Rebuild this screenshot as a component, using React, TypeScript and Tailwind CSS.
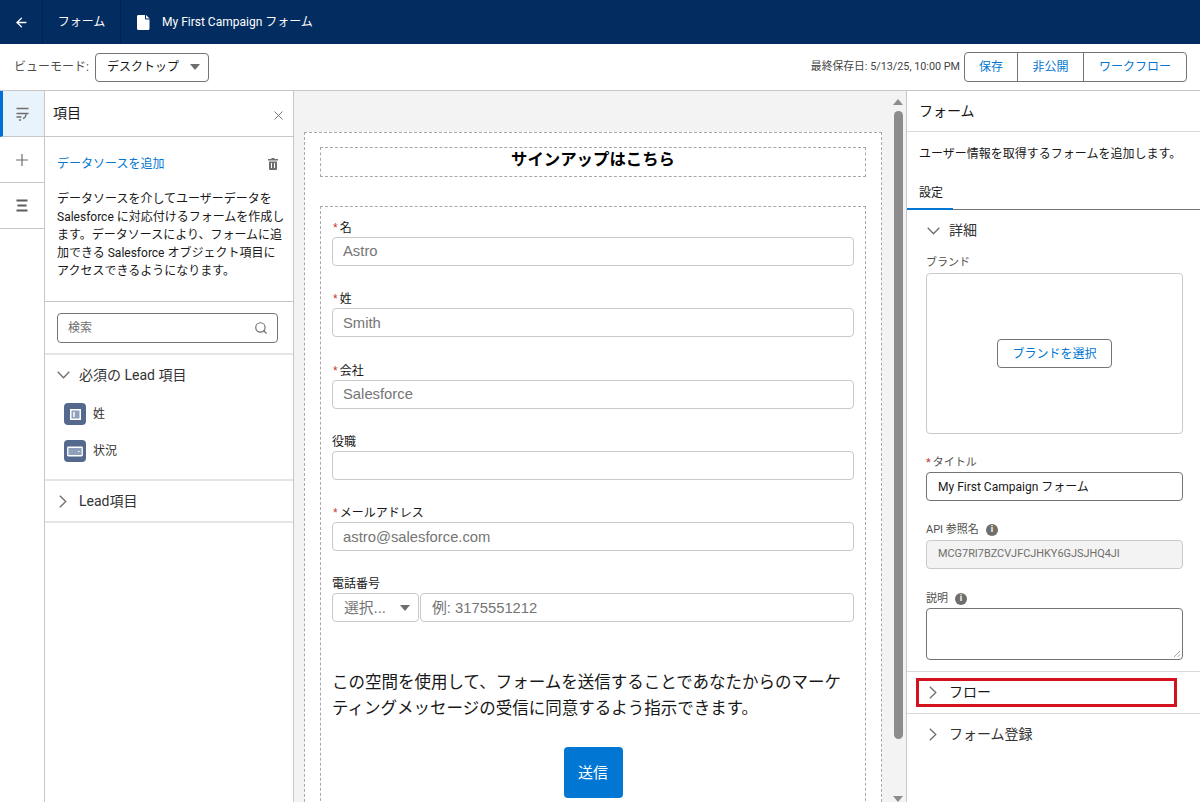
import React from "react";
import { ArrowLeft, Search, X } from "lucide-react";

const sans = "font-['Roboto','Noto_Sans_CJK_JP',sans-serif]";

const fields = [
  { label: "名", value: "Astro", required: true },
  { label: "姓", value: "Smith", required: true },
  { label: "会社", value: "Salesforce", required: true },
  { label: "役職", value: "", required: false },
  { label: "メールアドレス", value: "astro@salesforce.com", required: true },
];

const Caret = () => (
  <span className="w-0 h-0 border-x-[5px] border-x-transparent border-t-[6px] border-t-[#706e6b]" />
);

const ChevronDownIcon = () => (
  <svg width="13" height="8" viewBox="0 0 13 8" fill="none" stroke="#706e6b" strokeWidth="1.300">
    <path d="M0.700 0.800L6.500 6.800L12.300 0.800" />
  </svg>
);

const ChevronRightIcon = () => (
  <svg width="8" height="13" viewBox="0 0 8 13" fill="none" stroke="#706e6b" strokeWidth="1.300">
    <path d="M0.800 0.700L6.800 6.500L0.800 12.300" />
  </svg>
);

const FileIcon = () => (
  <svg width="13" height="15" viewBox="0 0 13 15" fill="white">
    <path d="M1.500 0H8v3.600c0 .5.400.9.900.9H12.500v9c0 .8-.6 1.500-1.400 1.500H1.500C.7 15 0 14.300 0 13.500V1.500C0 .7.700 0 1.500 0z" />
    <path d="M9 0l3.500 3.500H9.500A.5.500 0 0 1 9 3z" />
  </svg>
);

const FieldsIcon = () => (
  <svg width="13" height="14" viewBox="0 0 13 14" fill="none" stroke="#706e6b" strokeWidth="1.300">
    <path d="M0.500 1.500h12M0.500 6.500h12M10 6.500c0 2.500-1 4.500-3 5M0.500 10h5M3 13h2" />
  </svg>
);

const HamburgerIcon = () => (
  <svg width="12" height="13" viewBox="0 0 12 13" fill="none" stroke="#5c5c5c" strokeWidth="1.800">
    <path d="M0.500 1.500h11M1.500 6.500h9M0.500 11.500h11" />
  </svg>
);

const PlusIcon = () => (
  <svg width="12" height="12" viewBox="0 0 12 12" fill="none" stroke="#706e6b" strokeWidth="1.200">
    <path d="M6 0v12M0 6h12" />
  </svg>
);

const TrashIcon = () => (
  <svg width="10" height="12" viewBox="0 0 10 12" fill="#706e6b">
    <path d="M3.500 0h3v1H10v1.500H0V1h3.500z" />
    <path fillRule="evenodd" d="M1 3.500h8V11a1 1 0 0 1-1 1H2a1 1 0 0 1-1-1zM3 5v5h1V5zM6 5v5h1V5z" />
  </svg>
);

const FieldBadge = ({ kind }: { kind: "text" | "select" }) => (
  <span className="flex items-center justify-center w-[22px] h-[22px] rounded-[4px] bg-[#54698d]">
    {kind === "text" ? (
      <svg width="11" height="11" viewBox="0 0 11 11" fill="none" stroke="white">
        <rect x="0.750" y="0.750" width="9.500" height="9.500" strokeWidth="1.500" fill="#8fa0bc" />
        <path d="M4 3v5" strokeWidth="1.500" />
      </svg>
    ) : (
      <svg width="16" height="11" viewBox="0 0 16 11" fill="none" stroke="white">
        <rect x="0.750" y="1.250" width="14.500" height="8.500" rx="0.500" strokeWidth="1.300" fill="#8fa0bc" />
        <path d="M11 5.500h1.500" strokeWidth="1.200" />
      </svg>
    )}
  </span>
);

const RailButton = ({ active, children }: { active?: boolean; children: React.ReactNode }) => (
  <div
    className={`h-[46px] flex items-center justify-center border-b border-[#c9c7c5] ${
      active ? "bg-[#e8f3fc] border-l-[3px] border-l-[#0070d2] pr-[3px]" : ""
    }`}
  >
    {children}
  </div>
);

const TopBar = () => (
  <header className="h-[44px] bg-[#032d60] flex items-center text-white text-[12px] shrink-0">
    <div className="w-[43px] h-full flex items-center justify-center border-r border-[#01234d]">
      <ArrowLeft size={15} strokeWidth={2.200} />
    </div>
    <div className="w-[78px] h-full flex items-center justify-center border-r border-[#01234d]">フォーム</div>
    <div className="flex items-center pl-[16px] gap-[12px]">
      <FileIcon />
      <span>My First Campaign フォーム</span>
    </div>
  </header>
);

const ToolBar = () => (
  <div className="h-[47px] bg-white border-b border-[#c9c7c5] flex items-center pl-[14px] pr-[13px] shrink-0">
    <span className="text-[12px] text-[#514f4d] mr-[6px]">ビューモード:</span>
    <div className="w-[114px] h-[29px] border border-[#747474] rounded-[4px] flex items-center justify-between pl-[11px] pr-[8px] text-[12px] text-[#181818]">
      デスクトップ
      <Caret />
    </div>
    <span className="ml-auto mr-[4px] text-[10.800px] text-[#444444]">最終保存日: 5/13/25, 10:00 PM</span>
    <div className="flex h-[30px] border border-[#747474] rounded-[4px] text-[12px] text-[#0176d3]">
      <span className="w-[53px] flex items-center justify-center border-r border-[#747474]">保存</span>
      <span className="w-[66px] flex items-center justify-center border-r border-[#747474]">非公開</span>
      <span className="w-[102px] flex items-center justify-center">ワークフロー</span>
    </div>
  </div>
);

const FieldsPanel = () => (
  <aside className="w-[249px] bg-white border-r border-[#c9c7c5] shrink-0">
    <div className="h-[46px] border-b border-[#c9c7c5] flex items-center justify-between pl-[8px] pr-[7px] text-[14px] text-[#181818]">
      項目
      <X size={15} color="#706e6b" strokeWidth={1.500} className="mt-[3px]" />
    </div>
    <div className="h-[165px] border-b border-[#c9c7c5] pl-[12px] pr-[6px] pt-[17px]">
      <div className="flex items-center justify-between pr-[9px] text-[12px] leading-[20px] text-[#0176d3]">
        データソースを追加
        <TrashIcon />
      </div>
      <p className="mt-[16px] text-[12px] leading-[18px] text-[#181818]">
        データソースを介してユーザーデータを Salesforce に対応付けるフォームを作成します。データソースにより、フォームに追加できる Salesforce オブジェクト項目にアクセスできるようになります。
      </p>
    </div>
    <div className="h-[53px] border-b-2 border-[#e5e5e5] pl-[12px] pr-[15px] pt-[11px]">
      <div className="h-[30px] border border-[#747474] rounded-[4px] flex items-center justify-between pl-[10px] pr-[9px] text-[12px] text-[#706e6b]">
        検索
        <Search size={14} color="#706e6b" strokeWidth={2} />
      </div>
    </div>
    <div className="h-[126px] border-b-2 border-[#e5e5e5]">
      <div className="flex items-center h-[40px] pl-[12px] gap-[9px] text-[14px] text-[#333333]">
        <ChevronDownIcon />
        必須の Lead 項目
      </div>
      <div className="flex flex-col gap-[15px] pl-[19px] pt-[8px] text-[12px] text-[#333333]">
        <div className="flex items-center gap-[7px]">
          <FieldBadge kind="text" />姓
        </div>
        <div className="flex items-center gap-[7px]">
          <FieldBadge kind="select" />状況
        </div>
      </div>
    </div>
    <div className="h-[42px] pt-[1px] border-b-2 border-[#e5e5e5] flex items-center pl-[14px] gap-[12px] text-[14px] text-[#333333]">
      <ChevronRightIcon />
      Lead項目
    </div>
  </aside>
);

const FormField = ({ label, value, required }: { label: string; value: string; required: boolean }) => (
  <div className="h-[71.300px]">
    <div className="h-[19px] pb-[1px] flex items-end text-[12px] leading-[15px] text-[#181818]">
      {required && <span className="text-[#c23934] ml-[1px] mr-[2px]">*</span>}
      {label}
    </div>
    <div className="h-[29px] border border-[#c9c9c9] rounded-[4px] bg-white flex items-center pl-[10px] text-[14.800px] text-[#757575]">
      {value}
    </div>
  </div>
);

const Canvas = () => (
  <main className="flex-1 min-w-0 bg-[#f3f3f3] flex overflow-hidden">
    <div className="flex-1 min-w-0 pt-[41px] pl-[10px] pr-[8px]">
      <div className="h-[700px] bg-white border border-dashed border-[#a8a8a8] px-[15px] pt-[14px] font-['Liberation_Sans','Noto_Sans_CJK_JP',sans-serif]">
        <div className="h-[30px] border border-dashed border-[#a8a8a8] text-center text-[16.400px] font-bold leading-[23px] text-black">
          サインアップはこちら
        </div>
        <div className="h-[640px] mt-[29px] border border-dashed border-[#a8a8a8] px-[11px] pt-[11px]">
          {fields.map((f) => (
            <FormField key={f.label} {...f} />
          ))}
          <div className="h-[19px] pb-[1px] flex items-end text-[12px] leading-[15px] text-[#181818]">電話番号</div>
          <div className="flex gap-[1px] h-[29px]">
            <div className="w-[87px] border border-[#c9c9c9] rounded-[4px] flex items-center justify-between pl-[11px] pr-[8px] text-[14.800px] text-[#757575]">
              選択...
              <Caret />
            </div>
            <div className="flex-1 border border-[#c9c9c9] rounded-[4px] flex items-center pl-[11px] text-[14.800px] text-[#757575]">
              例: 3175551212
            </div>
          </div>
          <p className="mt-[47px] pr-[8px] text-[16.500px] leading-[26px] text-[#181818]">
            この空間を使用して、フォームを送信することであなたからのマーケティングメッセージの受信に同意するよう指示できます。
          </p>
          <div className="flex justify-center mt-[26px]">
            <div className="w-[59px] h-[51px] rounded-[4px] bg-[#0176d3] text-white text-[15px] flex items-center justify-center">
              送信
            </div>
          </div>
        </div>
      </div>
    </div>
    <div className="w-[16px] shrink-0 flex flex-col items-center">
      <span className="mt-[8px] w-0 h-0 border-x-[5px] border-x-transparent border-b-[6px] border-b-[#8c8c8c]" />
      <span className="mt-[6px] w-[9px] h-[628px] rounded-full bg-[#8c8c8c]" />
      <span className="mt-[57px] w-0 h-0 border-x-[5px] border-x-transparent border-t-[6px] border-t-[#8c8c8c]" />
    </div>
  </main>
);

const PropLabel = ({ children }: { children: React.ReactNode }) => (
  <div className="flex items-center gap-[7px] text-[11px] leading-[15px] text-[#514f4d]">{children}</div>
);

const InfoDot = () => (
  <span className="w-[12px] h-[12px] rounded-full bg-[#706e6b] flex items-center justify-center text-white text-[9px] font-bold leading-none">
    i
  </span>
);

const SettingsPanel = () => (
  <aside className="w-[294px] bg-white border-l border-[#c9c7c5] shrink-0">
    <div className="h-[41px] border-b border-[#d8d8d8] flex items-center pl-[12px] text-[14px] text-[#181818]">
      フォーム
    </div>
    <p className="pl-[12px] pt-[13px] text-[12px] leading-[18px] text-[#181818]">
      ユーザー情報を取得するフォームを追加します。
    </p>
    <div className="h-[47px] border-b border-[#747474] relative">
      <span className="absolute left-[12px] top-[21px] text-[12px] leading-[18px] text-[#181818]">設定</span>
      <span className="absolute left-0 -bottom-px w-[46px] h-[2px] bg-[#0176d3]" />
    </div>
    <div className="h-[462px] border-b border-[#d8d8d8] pl-[19px] pr-[17px]">
      <div className="h-[41px] pl-[1px] flex items-center gap-[9px] text-[14px] text-[#333333]">
        <ChevronDownIcon />
        詳細
      </div>
      <div className="pt-[4px]">
        <PropLabel>ブランド</PropLabel>
      </div>
      <div className="mt-[3px] h-[161px] border border-[#c9c9c9] rounded-[4px] flex items-center justify-center">
        <div className="w-[115px] h-[29px] border border-[#747474] rounded-[4px] flex items-center justify-center text-[12px] text-[#0176d3]">
          ブランドを選択
        </div>
      </div>
      <div className="mt-[21px]">
        <PropLabel>
          <span><span className="text-[#c23934] mr-[2px]">*</span>タイトル</span>
        </PropLabel>
      </div>
      <div className="mt-[2px] h-[29px] border border-[#747474] rounded-[4px] flex items-center pl-[11px] text-[12px] text-[#181818]">
        My First Campaign フォーム
      </div>
      <div className="mt-[21px]">
        <PropLabel>API 参照名 <InfoDot /></PropLabel>
      </div>
      <div className="mt-[3px] h-[29px] border border-[#c9c9c9] rounded-[4px] bg-[#f3f3f3] flex items-center pl-[11px] text-[10.900px] text-[#706e6b]">
        MCG7RI7BZCVJFCJHKY6GJSJHQ4JI
      </div>
      <div className="mt-[22px]">
        <PropLabel>説明 <InfoDot /></PropLabel>
      </div>
      <div className="mt-[2px] h-[52px] border border-[#747474] rounded-[4px] relative">
        <svg className="absolute right-[1px] bottom-[1px]" width="8" height="8" viewBox="0 0 8 8" stroke="#8c8c8c" strokeWidth="0.800">
          <path d="M1 7l6-6M4.500 7l2.500-2.500" />
        </svg>
      </div>
    </div>
    <div className="h-[42px] border-b border-[#d8d8d8] pl-[9px] pr-[23px] pt-[6px]">
      <div className="h-[29px] border-[3px] border-[#d4111f] flex items-center pl-[10px] gap-[12px] text-[14px] text-[#181818]">
        <ChevronRightIcon />
        フロー
      </div>
    </div>
    <div className="h-[41px] flex items-center pl-[22px] gap-[12px] text-[14px] text-[#333333]">
      <ChevronRightIcon />
      フォーム登録
    </div>
  </aside>
);

const App = () => (
  <div className={`h-[802px] flex flex-col overflow-hidden bg-white ${sans}`}>
    <TopBar />
    <ToolBar />
    <div className="flex-1 flex min-h-0">
      <nav className="w-[45px] border-r border-[#c9c7c5] shrink-0">
        <RailButton active><FieldsIcon /></RailButton>
        <RailButton><PlusIcon /></RailButton>
        <RailButton><HamburgerIcon /></RailButton>
      </nav>
      <FieldsPanel />
      <Canvas />
      <SettingsPanel />
    </div>
  </div>
);

export default App;
